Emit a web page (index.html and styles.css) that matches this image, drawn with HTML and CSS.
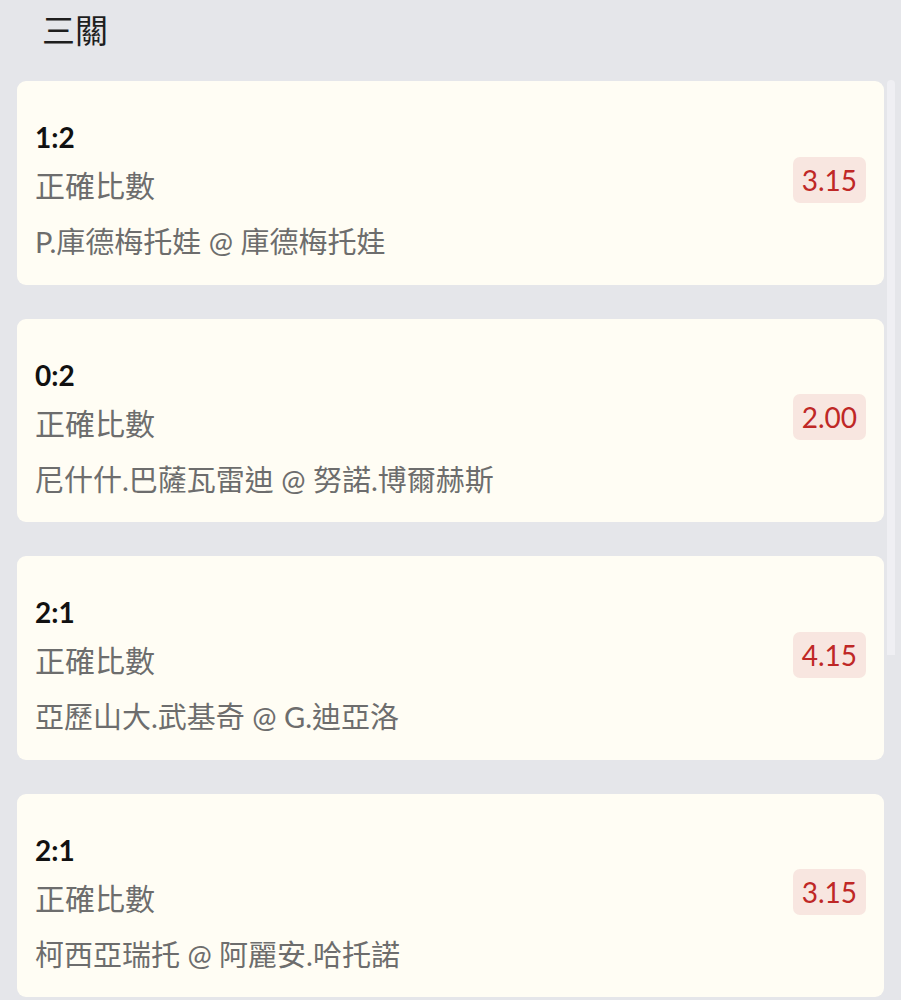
FILE: index.html
```html
<!DOCTYPE html>
<html lang="zh-Hant">
<head>
<meta charset="utf-8">
<title>三關</title>
<link rel="stylesheet" href="styles.css">
</head>
<body>
<div class="page">
  <h1 class="title">三關</h1>
  <div class="list">
    <div class="card">
      <div class="info">
        <div class="score">1:2</div>
        <div class="market">正確比數</div>
        <div class="match">P.庫德梅托娃 @ 庫德梅托娃</div>
      </div>
      <div class="odds">3.15</div>
    </div>
    <div class="card">
      <div class="info">
        <div class="score">0:2</div>
        <div class="market">正確比數</div>
        <div class="match">尼什什.巴薩瓦雷迪 @ 努諾.博爾赫斯</div>
      </div>
      <div class="odds">2.00</div>
    </div>
    <div class="card">
      <div class="info">
        <div class="score">2:1</div>
        <div class="market">正確比數</div>
        <div class="match">亞歷山大.武基奇 @ G.迪亞洛</div>
      </div>
      <div class="odds">4.15</div>
    </div>
    <div class="card">
      <div class="info">
        <div class="score">2:1</div>
        <div class="market">正確比數</div>
        <div class="match">柯西亞瑞托 @ 阿麗安.哈托諾</div>
      </div>
      <div class="odds">3.15</div>
    </div>
  </div>
  <div class="scrollbar"></div>
</div>
</body>
</html>
```

FILE: styles.css
```css
html, body {
  margin: 0;
  padding: 0;
  background: #e5e6ea;
  height: 1000px;
  overflow: hidden;
}
.page {
  position: relative;
  font-family: Lato, "Noto Sans CJK TC", sans-serif;
  padding: 0 17px;
}
.title {
  margin: 0;
  padding: 7px 0 0 25px;
  height: 81px;
  box-sizing: border-box;
  font-size: 33px;
  line-height: 44px;
  font-weight: 400;
  color: #1e1e1e;
  font-family: "Noto Sans CJK TC", sans-serif;
}
.list {
  display: flex;
  flex-direction: column;
  gap: 34px;
}
.card {
  background: #fffdf4;
  border-radius: 9px;
  height: 203.5px;
  box-sizing: border-box;
  padding: 0 18px;
  display: flex;
  justify-content: space-between;
  align-items: center;
}
.info {
  display: flex;
  flex-direction: column;
  padding: 36px 0 18px 0;
}
.score {
  font-family: Lato, sans-serif;
  font-weight: 700;
  font-size: 28px;
  line-height: 40px;
  color: #111;
}
.market {
  margin-top: 4px;
  font-size: 30px;
  line-height: 48px;
  color: #6d6d6d;
  font-family: Lato, "Noto Sans CJK TC", sans-serif;
}
.match {
  margin-top: 9px;
  font-size: 29px;
  line-height: 48px;
  color: #6d6d6d;
  font-family: Lato, "Noto Sans CJK TC", sans-serif;
}
.odds {
  margin-top: -6px;
  background: #f8e6e0;
  color: #bf2826;
  border-radius: 7px;
  height: 46px;
  line-height: 46px;
  padding: 0 9px;
  font-family: Lato, sans-serif;
  font-size: 28px;
}
.scrollbar {
  position: absolute;
  right: 6px;
  top: 80px;
  width: 8px;
  height: 575px;
  background: #efeff3;
  border-radius: 4px 4px 0 0;
}
```
